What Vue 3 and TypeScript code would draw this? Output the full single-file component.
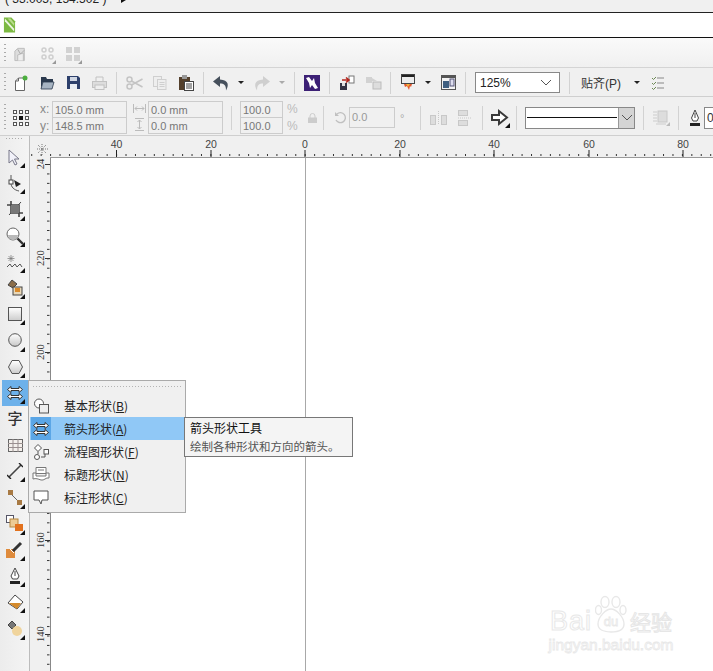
<script setup lang="ts">
const hLabels = [
  { x: 86.5, t: '40' }, { x: 181, t: '20' }, { x: 275, t: '0' },
  { x: 370, t: '20' }, { x: 464, t: '40' }, { x: 559, t: '60' }, { x: 653, t: '80' },
]
const step = 9.43
const hTicks: number[] = []
for (let i = -30; i < 44; i++) hTicks.push(275.2 + i * step)
const vLabels = [
  { y: 6, t: '24' }, { y: 100, t: '220' }, { y: 194, t: '200' },
  { y: 382, t: '160' }, { y: 476, t: '140' },
]
const vTicks: number[] = []
for (let i = 0; i < 56; i++) vTicks.push(6.5 + i * step)
const vLong = [6, 100, 194, 288, 382, 476]
const menu = [
  { pre: '基本形状(', key: 'B' },
  { pre: '箭头形状(', key: 'A', active: true },
  { pre: '流程图形状(', key: 'F' },
  { pre: '标题形状(', key: 'N' },
  { pre: '标注形状(', key: 'C' },
]
</script>

<template>
  <div class="app">
    <div class="status"><span>( 33.005, 154.502 )</span><i class="tri-r"></i></div>
    <div class="title">
      <svg width="13" height="16" viewBox="0 0 14 16">
        <path d="M1 0h8l4 4v12H1z" fill="#7cb942" />
        <path d="M2 1l10 11v3L2 4z" fill="#fff" opacity=".85" />
        <path d="M5 1l7 8v-3L8 1z" fill="#b9dc8c" />
      </svg>
    </div>

    <div class="bar bar1">
      <i class="grip"></i>
      <div class="cell"><svg width="16" height="16" viewBox="0 0 17 16"><path d="M2 15V5l3-3h7v13z" fill="#ddd" stroke="#bbb"/><path d="M5 15V9l6-2v8" fill="#eee" stroke="#bbb"/><path d="M8 8l-3-5M8 8l4-4" stroke="#aaa"/></svg></div>
      <div class="cell fly"><svg width="13" height="13" viewBox="0 0 13 13" fill="none" stroke="#cfcfcf" stroke-width="1.500"><circle cx="3" cy="3" r="2"/><circle cx="10" cy="3" r="2"/><circle cx="3" cy="10" r="2"/><circle cx="10" cy="10" r="2"/></svg></div>
      <div class="cell fly"><svg width="14" height="14" viewBox="0 0 14 14" fill="#d2d2d2"><rect x="0" y="0" width="6" height="6"/><rect x="8" y="0" width="6" height="6"/><rect x="0" y="8" width="6" height="6"/><rect x="8" y="8" width="6" height="6"/></svg></div>
    </div>

    <div class="bar bar2">
      <i class="grip"></i>
      <div class="cell"><svg width="15" height="16" viewBox="0 0 15 16"><path d="M1.500 15.500V6l3-3h6v12.500z" fill="#fff" stroke="#666"/><path d="M4.500 3v3h-3" fill="none" stroke="#666"/><circle cx="11" cy="3" r="2.500" fill="#4cae3f"/></svg></div>
      <div class="cell"><svg width="15" height="14" viewBox="0 0 15 14"><path d="M1 1h5l1 2h6v3H3L1 13z" fill="#2b3a4e"/><path d="M1 13l2-7h11l-2 7z" fill="#a7b4c2" stroke="#2b3a4e" stroke-width=".8"/></svg></div>
      <div class="cell"><svg width="13" height="13" viewBox="0 0 13 13"><path d="M0 0h11l2 2v11H0z" fill="#2c3f6b"/><rect x="3" y="1" width="7" height="4" fill="#cfd6e3"/><rect x="3" y="8" width="7" height="5" fill="#e8ecf3"/></svg></div>
      <div class="cell"><svg width="15" height="14" viewBox="0 0 15 14" fill="none" stroke="#c2c2c2"><path d="M4 5V1h7v4"/><rect x=".5" y="5.500" width="14" height="6" fill="#ddd"/><rect x="3" y="9" width="9" height="4.500" fill="#eee"/></svg></div>
      <i class="sep"></i>
      <div class="cell"><svg width="17" height="14" viewBox="0 0 17 14" fill="none" stroke="#c4c4c4" stroke-width="1.500"><circle cx="3.500" cy="3.500" r="2.500"/><circle cx="3.500" cy="10.500" r="2.500"/><path d="M5.500 5l11 6M5.500 9l11-6"/></svg></div>
      <div class="cell"><svg width="14" height="14" viewBox="0 0 14 14" fill="#eee" stroke="#cfcfcf"><rect x=".5" y=".5" width="8" height="10"/><rect x="4.500" y="3.500" width="8.500" height="10"/><path d="M6.500 6.500h5M6.500 8.500h5M6.500 10.500h5" fill="none"/></svg></div>
      <div class="cell"><svg width="15" height="16" viewBox="0 0 15 16"><rect x="0" y="2" width="11" height="13" fill="#54402c"/><rect x="3" y="0" width="5" height="4" fill="#999"/><rect x="5.500" y="6.500" width="9" height="9" fill="#fff" stroke="#444"/><path d="M7 9h6M7 11h6M7 13h6" stroke="#444"/></svg></div>
      <i class="sep"></i>
      <div class="cell"><svg width="17" height="16" viewBox="0 0 17 16"><path d="M7 1L0 6.500 7 12V8.500c4 0 6 1.500 6 7 3-5 3-10.500-6-11z" fill="#46505c"/></svg></div>
      <div class="drop"><i class="tri-d"></i></div>
      <div class="cell"><svg width="17" height="16" viewBox="0 0 17 16"><path d="M10 1l7 5.500L10 12V8.500c-4 0-6 1.500-6 7-3-5-3-10.500 6-11z" fill="#cfcfcf"/></svg></div>
      <div class="drop wide"><i class="tri-d pale"></i></div>
      <i class="sep"></i>
      <div class="cell"><svg width="16" height="16" viewBox="0 0 16 16"><rect width="16" height="16" fill="#3c2075"/><path d="M2 3l3-1 3 4 2-3 1 5 3 5-3 1-3-4-2 3-1-5z" fill="#fff"/></svg></div>
      <i class="sep"></i>
      <div class="cell"><svg width="16" height="16" viewBox="0 0 16 16"><rect x="1" y="8" width="7" height="7" fill="#334"/><rect x="3" y="8" width="3" height="3" fill="#ddd"/><rect x="10" y="1" width="5" height="7" fill="#fff" stroke="#777"/><path d="M3 5h7M7 2.500L10 5 7 7.500" stroke="#b3261e" stroke-width="1.600" fill="none"/></svg></div>
      <div class="cell"><svg width="17" height="15" viewBox="0 0 17 15" fill="#d2d2d2"><rect x="1" y="2" width="6" height="6"/><rect x="8" y="7" width="8" height="7" stroke="#bbb" fill="#ddd"/><path d="M7 3l5 3h-5z"/></svg></div>
      <i class="sep"></i>
      <div class="cell"><svg width="14" height="17" viewBox="0 0 14 17"><rect x=".5" y=".5" width="13" height="9" fill="#ececec" stroke="#444"/><rect x="1" y="1" width="12" height="2" fill="#222"/><path d="M3 10h8l-1 3-1-1-1 4-2-4-2 1z" fill="#e2562b"/><path d="M5 10h4l-2 3z" fill="#f3b13c"/></svg></div>
      <div class="drop"><i class="tri-d"></i></div>
      <div class="cell"><svg width="15" height="15" viewBox="0 0 15 15"><rect x=".5" y=".5" width="14" height="14" fill="#f4f4f4" stroke="#555"/><rect x="1" y="1" width="13" height="2" fill="#555"/><rect x="2" y="6" width="6" height="7" fill="#3f5f80"/><rect x="9" y="4" width="4" height="7" fill="#dde" stroke="#557"/></svg></div>
      <i class="sep"></i>
      <div class="zoom-box"><span>125%</span><svg width="12" height="7" viewBox="0 0 12 7" fill="none" stroke="#555"><path d="M1 1l5 5 5-5"/></svg></div>
      <i class="sep snap-sep"></i>
      <span class="snap">贴齐(P)</span>
      <div class="drop snap-drop"><i class="tri-d"></i></div>
      <div class="cell"><svg width="13" height="14" viewBox="0 0 13 14" fill="none" stroke="#6d8a55"><path d="M1 2l1.500 1.500L5 1M1 7l1.500 1.500L5 6M1 12l1.500 1.500L5 11"/><path d="M6 2h7M6 7h7M6 12h7" stroke="#888"/></svg></div>
    </div>

    <div class="bar bar3">
      <i class="grip tall"></i>
      <svg class="origin" width="16" height="16" viewBox="0 0 16 16">
        <g fill="#fff" stroke="#555"><rect x=".5" y=".5" width="3" height="3"/><rect x="6.500" y=".5" width="3" height="3"/><rect x="12.500" y=".5" width="3" height="3"/><rect x=".5" y="6.500" width="3" height="3"/><rect x="12.500" y="6.500" width="3" height="3"/><rect x=".5" y="12.500" width="3" height="3"/><rect x="6.500" y="12.500" width="3" height="3"/><rect x="12.500" y="12.500" width="3" height="3"/></g>
        <rect x="6" y="6" width="4" height="4" fill="#111"/>
      </svg>
      <div class="xy"><span>x:</span><span>y:</span></div>
      <div class="stack pos"><span>105.0 mm</span><span>148.5 mm</span></div>
      <div class="xy icons">
        <svg width="13" height="9" viewBox="0 0 13 9" fill="none" stroke="#bbb"><path d="M.5 0v9M12.500 0v9M2 4.500h9M4 2.500l-2 2 2 2M9 2.500l2 2-2 2"/></svg>
        <svg width="9" height="13" viewBox="0 0 9 13" fill="none" stroke="#bbb"><path d="M0 .5h9M0 12.500h9M4.500 2v9M2.500 4l2-2 2 2M2.500 9l2 2 2-2"/></svg>
      </div>
      <div class="stack pos"><span>0.0 mm</span><span>0.0 mm</span></div>
      <i class="sep s-a"></i>
      <div class="stack pct"><span>100.0</span><span>100.0</span></div>
      <div class="xy percent"><span>%</span><span>%</span></div>
      <svg class="lock" width="9" height="10" viewBox="0 0 9 10"><path d="M2 5V3a2.500 2.500 0 015 0v2" fill="none" stroke="#ccc"/><rect y="4.500" width="9" height="5.500" fill="#ccc"/></svg>
      <i class="sep s-b"></i>
      <svg class="rot" width="13" height="13" viewBox="0 0 13 13" fill="none" stroke="#c0c0c0" stroke-width="1.400"><path d="M3 3a5 5 0 11-1 6"/><path d="M1 1v4h4" fill="#c0c0c0" stroke="none"/></svg>
      <div class="angle">0.0</div>
      <span class="deg">°</span>
      <i class="sep s-c"></i>
      <svg class="al1" width="17" height="14" viewBox="0 0 17 14" fill="#ddd" stroke="#c8c8c8"><rect x=".5" y="4.500" width="5" height="9"/><rect x="11.500" y="4.500" width="5" height="9"/><path d="M8.500 0v14" stroke-dasharray="1 1"/></svg>
      <svg class="al2" width="14" height="16" viewBox="0 0 14 16" fill="#ddd" stroke="#c8c8c8"><rect x=".5" y=".5" width="9" height="5"/><rect x=".5" y="10.500" width="9" height="5"/><path d="M0 8h14" stroke-dasharray="1 1"/></svg>
      <i class="sep s-d"></i>
      <svg class="arrow" width="20" height="20" viewBox="0 0 20 20"><path d="M1 7h7V3l8 6.500L8 16v-4H1z" fill="#fff" stroke="#3a3a3a" stroke-width="2"/><path d="M14 20l5-5v5z" fill="#111"/></svg>
      <i class="sep s-e"></i>
      <div class="line-box"><div class="line-sample"><i></i></div><div class="line-btn"><svg width="12" height="7" viewBox="0 0 12 7" fill="none" stroke="#555"><path d="M1 1l5 5 5-5"/></svg></div></div>
      <i class="sep s-f"></i>
      <svg class="wrap" width="17" height="16" viewBox="0 0 17 16"><path d="M0 2h4M0 5h4M0 8h4M0 11h4M3 14h10" stroke="#ccc"/><rect x="5" y="1" width="9" height="11" fill="#ddd" stroke="#c8c8c8"/><path d="M13 16l4-4v4z" fill="#bbb"/></svg>
      <i class="sep s-g"></i>
      <svg class="pen" width="10" height="16" viewBox="0 0 10 16"><path d="M5 0L8.500 8 7 11H3L1.500 8z" fill="#fff" stroke="#444"/><path d="M5 3v5" stroke="#444"/><rect x="0" y="13" width="10" height="3" fill="#222"/></svg>
      <div class="outline">0</div>
    </div>

    <div class="main">
      <aside class="toolbox">
        <div class="tb-grip"></div>
        <div class="tb fly-t"><svg width="14" height="17" viewBox="0 0 14 17"><path d="M1 1v13l3.500-3 2.500 5 2-1-2.500-5H11z" fill="#f2f2fa" stroke="#778"/></svg></div>
        <div class="tb fly-t"><svg width="18" height="18" viewBox="0 0 18 18"><path d="M5 1v5M5 9c0 4 3 7 8 8" fill="none" stroke="#555"/><rect x="3" y="6" width="4" height="4" fill="#fff" stroke="#444"/><path d="M8 6l7 4-5 3z" fill="#222"/></svg></div>
        <div class="tb fly-t"><svg width="16" height="16" viewBox="0 0 16 16" fill="none" stroke="#444" stroke-width="1.600"><path d="M4 0v12h12M0 4h12v12"/><path d="M14 1L2 14" stroke-width="1"/><rect x="4" y="4" width="8" height="8" fill="#777" stroke="none"/></svg></div>
        <div class="tb fly-t"><svg width="18" height="18" viewBox="0 0 18 18"><circle cx="7" cy="7" r="6" fill="#fff" stroke="#666"/><path d="M2 8h10a5 5 0 01-10 0z" fill="#b9b9b9"/><path d="M11.500 11.500L17 17" stroke="#333" stroke-width="2.400"/></svg></div>
        <div class="tb fly-t"><svg width="18" height="16" viewBox="0 0 18 16" fill="none" stroke="#555"><path d="M1 13l3-3 2 3 3-3 2 3 3-3 2 3"/><path d="M5 1v7M1.500 4.500h7M2.500 2l5 5M7.500 2l-5 5" stroke="#777" stroke-width=".7"/></svg></div>
        <div class="tb fly-t"><svg width="18" height="18" viewBox="0 0 18 18"><path d="M2 6l4-5 5 4-4 4z" fill="#8a6d4a" stroke="#444"/><rect x="7" y="8" width="9" height="8" fill="#e9d8b8" stroke="#444"/><rect x="9" y="9" width="5" height="4" fill="#d98a2b"/></svg></div>
        <div class="tb fly-t"><svg width="14" height="14" viewBox="0 0 14 14"><defs><linearGradient id="rg" x1="0" y1="0" x2="0" y2="1"><stop offset="0" stop-color="#fff"/><stop offset="1" stop-color="#ccc"/></linearGradient></defs><rect x=".5" y=".5" width="13" height="13" fill="url(#rg)" stroke="#555"/></svg></div>
        <div class="tb fly-t"><svg width="14" height="14" viewBox="0 0 14 14"><defs><linearGradient id="eg" x1="0" y1="0" x2="0" y2="1"><stop offset="0" stop-color="#fff"/><stop offset="1" stop-color="#c8c8c8"/></linearGradient></defs><circle cx="7" cy="7" r="6.300" fill="url(#eg)" stroke="#555"/></svg></div>
        <div class="tb fly-t"><svg width="15" height="14" viewBox="0 0 15 14"><defs><linearGradient id="pg" x1="0" y1="0" x2="0" y2="1"><stop offset="0" stop-color="#fff"/><stop offset="1" stop-color="#ccc"/></linearGradient></defs><path d="M4 .5h7L14.500 7 11 13.500H4L.5 7z" fill="url(#pg)" stroke="#555"/></svg></div>
        <div class="tb fly-t on">
          <svg width="16" height="14" viewBox="0 0 16 14" fill="#fff" stroke="#333"><path d="M4 .5L.5 3.500 4 6.500v-2h8v2l3.500-3L12 .5v2H4z"/><path d="M4 7.500L.5 10.500 4 13.500v-2h8v2l3.500-3L12 7.500v2H4z"/></svg>
        </div>
        <div class="tb"><span class="zi">字</span></div>
        <div class="tb"><svg width="15" height="13" viewBox="0 0 15 13"><rect x=".5" y=".5" width="14" height="12" fill="#f4f0ec" stroke="#666"/><path d="M5 0v13M10 0v13M0 4.500h15M0 8.500h15" stroke="#9a8f8f"/></svg></div>
        <div class="tb fly-t"><svg width="16" height="16" viewBox="0 0 16 16"><path d="M2 14L14 2" stroke="#444" stroke-width="1.600"/><path d="M0 12l4 4M12 0l4 4" stroke="#222" stroke-width="1.400"/></svg></div>
        <div class="tb fly-t"><svg width="16" height="16" viewBox="0 0 16 16"><path d="M4 4l9 9" stroke="#666"/><rect x="1" y="0" width="5" height="5" fill="#a87a44"/><rect x="10" y="10" width="5" height="5" fill="#a87a44"/></svg></div>
        <div class="tb fly-t"><svg width="18" height="17" viewBox="0 0 18 17"><rect x=".5" y=".5" width="7" height="7" fill="#fff" stroke="#556"/><rect x="4" y="4" width="8" height="8" fill="#eccb94" stroke="#b8873f"/><rect x="9" y="9" width="8" height="7" fill="#e2711d"/></svg></div>
        <div class="tb fly-t"><svg width="18" height="17" viewBox="0 0 18 17"><rect x="0" y="8" width="9" height="9" fill="#df8b3c"/><path d="M4 8l4 4M8 9l7-7" stroke="#fff" stroke-width="1"/><path d="M7 10l8-8" stroke="#333" stroke-width="3"/></svg></div>
        <div class="tb fly-t"><svg width="10" height="16" viewBox="0 0 10 16"><path d="M5 0L9 8 7.500 11h-5L1 8z" fill="#fff" stroke="#444"/><path d="M5 3v5" stroke="#444"/><rect x="0" y="13" width="10" height="3" fill="#222"/></svg></div>
        <div class="tb fly-t"><svg width="17" height="17" viewBox="0 0 17 17"><path d="M8 1l8 7-6 7-9-6z" fill="#fff" stroke="#444"/><path d="M2 9h12l-4 6z" fill="#d48a2c"/></svg></div>
        <div class="tb fly-t"><svg width="16" height="16" viewBox="0 0 16 16"><path d="M1 5l4-4 4 4-4 4z" fill="#777" stroke="#444"/><circle cx="10" cy="11" r="5" fill="#f0d49c"/></svg></div>
      </aside>

      <div class="work">
        <svg class="hruler" width="683" height="22" viewBox="0 0 683 22">
          <g stroke="#333">
            <line v-for="x in hTicks" :key="x" :x1="x" :x2="x" y1="18" y2="20" />
            <line v-for="l in hLabels" :key="l.x" :x1="l.x" :x2="l.x" y1="14" y2="21" stroke="#222" />
          </g>
          <text v-for="l in hLabels" :key="'t' + l.x" :x="l.x" y="12" class="rt" text-anchor="middle">{{ l.t }}</text>
          <path d="M12 8v11M7 13h11M8 9l8 8M16 9l-8 8" stroke="#777" stroke-width="1" stroke-dasharray="1 1"/>
          <line x1="20" x2="683" y1="21.500" y2="21.500" stroke="#999" />
        </svg>
        <div class="lower">
          <svg class="vruler" width="20" height="513" viewBox="0 0 20 513">
            <g stroke="#333">
              <line v-for="y in vTicks" :key="y" :y1="y" :y2="y" x1="17" x2="19.500" />
              <line v-for="y in vLong" :key="y" :y1="y + 0.5" :y2="y + 0.5" x1="15" x2="20" />
            </g>
            <text v-for="l in vLabels" :key="l.t" class="rv" :transform="`translate(14 ${l.y})rotate(-90)`" text-anchor="middle">{{ l.t }}</text>
          </svg>
          <div class="canvas">
            <i class="guide"></i>
            <div class="mark">
              <div class="mark-top">
                <span class="mark-bai">Bai</span>
                <svg width="32" height="38" viewBox="0 0 32 38" fill="#fff" stroke="#e8e8e8" stroke-width="1.400">
                  <ellipse cx="10" cy="7" rx="4" ry="5.500"/><ellipse cx="21" cy="7" rx="4" ry="5.500"/>
                  <ellipse cx="3.500" cy="15" rx="3" ry="4.500"/><ellipse cx="28" cy="15" rx="3" ry="4.500"/>
                  <path d="M16 14c5 0 13 8 13 15 0 6-6 8-13 8S3 35 3 29c0-7 8-15 13-15z"/>
                  <text x="16" y="31" text-anchor="middle" class="mark-du">du</text>
                </svg>
                <span class="mark-cn">经验</span>
              </div>
              <div class="mark-url">jingyan.baidu.com</div>
            </div>
          </div>
        </div>
      </div>
    </div>

    <div class="flyout">
      <div class="fo-grip"></div>
      <div v-for="(m, i) in menu" :key="m.key" class="fo-item" :class="{ act: m.active }">
        <div class="fo-ic">
          <svg v-if="i === 0" width="17" height="16" viewBox="0 0 17 16" fill="#fff" stroke="#555"><circle cx="6" cy="5.500" r="4.500"/><rect x="6.500" y="6.500" width="9" height="8.500" fill="#eee"/></svg>
          <svg v-else-if="i === 1" width="16" height="14" viewBox="0 0 16 14" fill="#fff" stroke="#333"><path d="M4 .5L.5 3.500 4 6.500v-2h8v2l3.500-3L12 .5v2H4z"/><path d="M4 7.500L.5 10.500 4 13.500v-2h8v2l3.500-3L12 7.500v2H4z"/></svg>
          <svg v-else-if="i === 2" width="16" height="16" viewBox="0 0 16 16" fill="#fff" stroke="#555"><path d="M5 .5L8.500 4 5 7.500 1.500 4z"/><rect x="11" y="5.500" width="4.500" height="4.500"/><circle cx="4" cy="13" r="2.500"/><path d="M5 7.500V10M8 13h4V10" fill="none"/></svg>
          <svg v-else-if="i === 3" width="18" height="16" viewBox="0 0 18 16" fill="#fff" stroke="#777"><path d="M4 .5h10v6H4zM6 3h6"/><path d="M1 6h3v3h10V6h3v5c-3-1-5 3-8 2s-5-2-8-1z"/></svg>
          <svg v-else width="16" height="15" viewBox="0 0 16 15" fill="#fff" stroke="#555"><path d="M1 1h14v9H9l-1 4-2-4H1z"/></svg>
        </div>
        <span class="fo-text">{{ m.pre }}<u>{{ m.key }}</u>)</span>
      </div>
    </div>

    <div class="tip">
      <div class="tip-t">箭头形状工具</div>
      <div class="tip-d">绘制各种形状和方向的箭头。</div>
    </div>
  </div>
</template>

<style scoped>
.app {
  position: relative; width: 713px; height: 671px; overflow: hidden; display: flex; flex-direction: column;
  background: #f0f0f0; font-family: "Liberation Sans", "Noto Sans CJK SC", sans-serif; font-size: 11px; color: #333;
}
i { display: block; flex: none; }
.status { height: 12px; flex: none; box-sizing: border-box; display: flex; align-items: flex-end; padding: 0 0 5px 5px; gap: 15px; font-size: 12px; line-height: 16px; color: #222; overflow: hidden; }
.status span { flex: none; height: 16px; white-space: pre; }
.tri-r { width: 0; height: 0; border-left: 5px solid #111; border-top: 3px solid transparent; border-bottom: 3px solid transparent; margin-bottom: 4px; }
.title { flex: none; background: #fff; border-top: 1.500px solid #222; border-bottom: 1.500px solid #111; display: flex; align-items: center; padding-left: 3px; height: 24px; }
.bar { display: flex; align-items: center; flex: none; box-sizing: border-box; }
.bar1 { height: 30px; background: linear-gradient(#fafafa, #f0f0f0); border-bottom: 1px solid #d4d4d4; padding: 2px 0 0 4px; }
.bar2 { height: 29px; border-bottom: 1px solid #cfcfcf; padding: 1px 0 0 4px; }
.bar3 { height: 39px; border-bottom: 1px solid #cfcfcf; padding: 3px 0 0 4px; }
.grip { width: 2px; height: 20px; margin-right: 2px; background: repeating-linear-gradient(#aaa 0 1px, transparent 1px 4px); }
.grip.tall { height: 28px; margin-right: 7px; }
.cell { width: 26px; height: 26px; flex: none; display: flex; align-items: center; justify-content: center; position: relative; }
.cell.fly::after { content: ""; position: absolute; right: 4px; bottom: 3px; border-left: 4px solid transparent; border-bottom: 4px solid #999; }
.sep { width: 1px; height: 22px; background: #d2d2d2; margin: 0 4px; }
.drop { width: 14px; display: flex; justify-content: center; flex: none; }
.drop.wide { width: 16px; }
.tri-d { width: 0; height: 0; border-top: 3px solid #222; border-left: 3px solid transparent; border-right: 3px solid transparent; }
.tri-d.pale { border-top-color: #aaa; }
.zoom-box { width: 85px; height: 21px; margin-left: 5px; box-sizing: border-box; border: 1px solid #888; background: #fff; display: flex; align-items: center; justify-content: space-between; padding: 0 7px 0 4px; flex: none; font-size: 12px; color: #222; }
.snap-sep { margin: 0 0 0 9px; }
.snap { width: 39px; margin-left: 11px; font-size: 12px; color: #333; white-space: nowrap; flex: none; }
.snap-drop { margin-left: 10px; }
.origin { margin-right: 11px; flex: none; }
.xy { width: 12px; height: 33px; display: flex; flex-direction: column; justify-content: space-around; color: #888; font-size: 12px; flex: none; }
.xy.icons { width: 13px; align-items: center; margin: 0 2px 0 6px; }
.stack { height: 33px; flex: none; box-sizing: border-box; display: flex; flex-direction: column; border: 1px solid #ccc; color: #777; font-size: 11px; }
.stack span { flex: 1; display: flex; align-items: center; padding-left: 2px; }
.stack span + span { border-top: 1px solid #ccc; }
.pos { width: 75px; }
.pct { width: 43px; }
.s-a { margin: 0 8px; height: 24px; }
.xy.percent { margin-left: 4px; color: #bbb; }
.lock { margin-left: 9px; flex: none; }
.s-b { margin: 0 10px 0 6px; height: 24px; }
.rot { flex: none; margin-right: 2px; }
.angle { width: 46px; height: 21px; box-sizing: border-box; border: 1px solid #ccc; color: #999; font-size: 11px; line-height: 19px; padding-left: 2px; flex: none; }
.deg { width: 11px; margin-left: 5px; color: #aaa; flex: none; }
.s-c { margin: 0 9px; height: 24px; }
.al1 { margin-right: 11px; flex: none; }
.al2 { flex: none; }
.s-d { margin: 0 8px 0 10px; height: 24px; }
.arrow { flex: none; }
.s-e { margin: 0 8px 0 5px; height: 24px; }
.line-box { width: 110px; height: 22px; box-sizing: border-box; border: 1px solid #888; background: #fff; display: flex; flex: none; }
.line-sample { flex: 1; display: flex; align-items: center; padding: 0 1px; }
.line-sample i { width: 100%; height: 1px; background: #111; }
.line-btn { width: 15px; background: #d4d4d4; border-left: 1px solid #999; display: flex; align-items: center; justify-content: center; }
.s-f { margin: 0 9px 0 8px; height: 24px; }
.wrap { flex: none; }
.s-g { margin: 0 11px 0 8px; height: 24px; }
.pen { flex: none; margin-right: 4px; }
.outline { width: 30px; height: 22px; box-sizing: border-box; border: 1px solid #888; background: #fff; font-size: 12px; line-height: 20px; padding-left: 2px; flex: none; }
.main { flex: 1; min-height: 0; display: flex; }
.toolbox { width: 30px; flex: none; box-sizing: border-box; border-right: 1px solid #bcbcbc; background: linear-gradient(90deg, #ececec, #f4f4f4); }
.tb-grip { height: 8px; margin: 0 6px; background: repeating-linear-gradient(90deg, #aaa 0 1px, transparent 1px 3px) 0 2px / 100% 1px no-repeat; }
.tb { height: 26.200px; margin: 0 1px 0 2px; display: flex; align-items: center; justify-content: center; position: relative; }
.fly-t::after { content: ""; position: absolute; right: 3px; bottom: 2px; border-left: 5px solid transparent; border-bottom: 5px solid #111; }
.tb.on { background: #6db1ea; }
.zi { font-size: 15px; font-weight: 500; color: #333; line-height: 1; padding-bottom: 3px; font-family: "Noto Sans CJK SC", sans-serif; }
.work { flex: 1; min-width: 0; display: flex; flex-direction: column; }
.hruler { display: block; flex: none; }
.lower { flex: 1; min-height: 0; display: flex; }
.vruler { display: block; flex: none; }
.rt { font-size: 10.500px; fill: #444; font-family: "Liberation Sans", sans-serif; }
.rv { font-size: 10.500px; fill: #333; font-family: "Liberation Serif", serif; }
.canvas { flex: 1; position: relative; background: #fff; border-left: 1px solid #888; overflow: hidden; }
.guide { position: absolute; left: 254px; top: 0; bottom: 0; width: 1px; background: #a8a8a8; }
.mark { position: absolute; left: 495px; top: 437px; width: 130px; display: flex; flex-direction: column; align-items: center; gap: 4px; }
.mark-top { display: flex; align-items: flex-end; gap: 3px; height: 38px; }
.mark-bai { font-size: 27px; line-height: 24px; color: #fff; -webkit-text-stroke: 1px #e8e8e8; font-family: "Liberation Sans", sans-serif; letter-spacing: 1px; }
.mark-cn { font-size: 21px; line-height: 24px; color: #fff; -webkit-text-stroke: 1px #e6e6e6; font-family: "Noto Sans CJK SC", sans-serif; }
.mark-du { font-size: 13px; font-family: "Liberation Sans", sans-serif; stroke-width: .8; }
.mark-url { font-size: 15.500px; line-height: 15px; color: #fff; -webkit-text-stroke: .8px #e8e8e8; white-space: nowrap; }
.flyout { position: absolute; left: 28px; top: 380px; width: 158px; height: 133px; box-sizing: border-box; border: 1px solid #aaa; background: #f0f0f0; padding: 1px; display: flex; flex-direction: column; }
.fo-grip { height: 8px; margin: 4px 3px 0; flex: none; background: repeating-linear-gradient(90deg, #b4b4b4 0 1px, transparent 1px 3px) 0 0 / 100% 1px no-repeat; }
.fo-item { height: 23px; flex: none; display: flex; align-items: center; }
.fo-item.act { background: #90c8f6; }
.fo-ic { width: 20px; height: 23px; margin-left: 1px; display: flex; align-items: center; justify-content: center; flex: none; }
.act .fo-ic { background: #5ba6e6; }
.fo-text { margin-left: 13px; font-size: 12px; color: #222; white-space: nowrap; font-family: "Noto Sans CJK SC", sans-serif; }
.tip { position: absolute; left: 184px; top: 417px; width: 169px; height: 40px; box-sizing: border-box; border: 1px solid #777; background: #f4f4f4; padding: 1px 5px; font-family: "Noto Sans CJK SC", sans-serif; }
.tip-t { font-size: 12px; line-height: 17px; color: #111; }
.tip-d { font-size: 11.500px; line-height: 17px; margin-top: 2px; color: #555; white-space: nowrap; }
</style>
